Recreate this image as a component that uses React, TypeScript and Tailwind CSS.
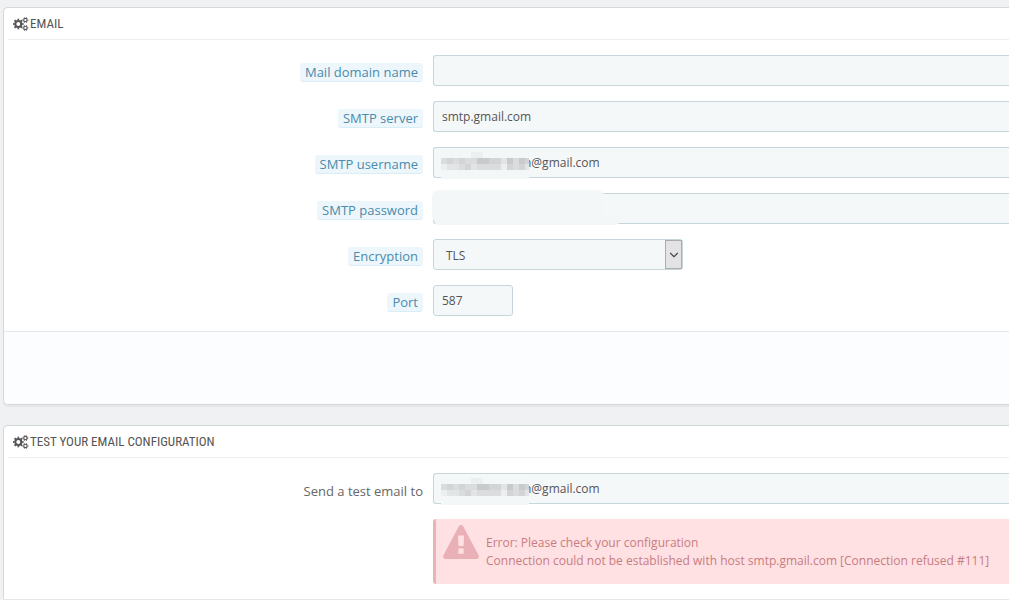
import React from "react";
import { FiChevronDown } from "react-icons/fi";

type PanelProps = {
  title: string;
  footer?: boolean;
  children: React.ReactNode;
};

type RowProps = {
  id: string;
  label: string;
  hint?: boolean;
  children: React.ReactNode;
};

const inputClass =
  "block h-[31px] w-full rounded-l-[3px] border border-r-0 border-[#c7d6db] bg-[#f5f8f9] px-2 text-xs text-[#555] outline-none";

// shade of every 6px block, row by row
const blocks = [
  [0, 0, 0, 0, 0, 1, 1, 0, 0, 0, 0, 0, 0, 0, 0],
  [3, 4, 3, 4, 3, 3, 5, 5, 4, 4, 2, 5, 3, 5, 4],
  [1, 2, 2, 3, 4, 2, 3, 3, 3, 3, 1, 4, 3, 4, 2],
];

const shades = ["#f3f7f8", "#ebeff0", "#e2e5e6", "#dadcdd", "#d2d4d5", "#c8cacb"];

const Mosaic = () => (
  <svg
    className="absolute top-1 left-2 h-7 w-[88px]"
    viewBox="0 0 88 28"
    shapeRendering="crispEdges"
    aria-hidden="true"
  >
    <rect width="88" height="28" fill="#f3f7f8" />
    {blocks.map((row, y) =>
      row.map((shade, x) => (
        <rect key={`${x}-${y}`} x={x * 6} y={1 + y * 6} width="6" height="6" fill={shades[shade]} />
      ))
    )}
  </svg>
);

const CogsIcon = () => (
  <svg className="h-[14px] w-4 shrink-0" viewBox="0 0 16 14" fill="none" stroke="currentColor" aria-hidden="true">
    <circle cx="5.3" cy="7" r="3" strokeWidth="2" />
    <circle cx="5.3" cy="7" r="4.5" strokeWidth="1.6" pathLength="16" strokeDasharray="1 1" strokeDashoffset="0.5" />
    <circle cx="12.4" cy="3.1" r="1.7" strokeWidth="1.1" />
    <circle cx="12.4" cy="3.1" r="2.6" strokeWidth="0.9" pathLength="12" strokeDasharray="1 1" strokeDashoffset="0.5" />
    <circle cx="12.4" cy="10.9" r="1.7" strokeWidth="1.1" />
    <circle cx="12.4" cy="10.9" r="2.6" strokeWidth="0.9" pathLength="12" strokeDasharray="1 1" strokeDashoffset="0.5" />
  </svg>
);

const Panel: React.FC<PanelProps> = ({ title, footer, children }) => (
  <section className="mb-5 ml-[3px] rounded-l-[5px] border border-r-0 border-[#d3d8db] bg-white shadow-[0_2px_0_rgba(0,0,0,0.04)] last:mb-0 last:rounded-bl-none last:border-b-0">
    <h3 className="ml-1 flex h-8 items-center gap-px border-b border-[#eee] pl-[5px] font-['Ubuntu_Condensed','Roboto_Condensed','Open_Sans_Condensed','Liberation_Sans_Narrow',sans-serif] text-[13px] font-normal text-[#555] uppercase">
      <CogsIcon />
      {title}
    </h3>
    <div className="flex flex-col gap-[15px] py-[15px]">{children}</div>
    {footer && <div className="h-[73px] rounded-bl-[5px] border-t border-[#e6e9eb] bg-[#fcfdfe]" />}
  </section>
);

const Row: React.FC<RowProps> = ({ id, label, hint, children }) => (
  <div className="grid grid-cols-[419px_1fr] gap-[10px]">
    <div className="flex items-center justify-end pt-1 text-[13px]">
      <label
        htmlFor={id}
        className={
          hint
            ? "rounded-[3px] border-b border-[#d9edf7] bg-[#edf7fb] px-[5px] leading-[18px] text-[#4a8aac]"
            : "leading-[18px] text-[#666]"
        }
      >
        {label}
      </label>
    </div>
    <div className="relative min-w-0">{children}</div>
  </div>
);

const ErrorAlert = () => (
  <div role="alert" className="ml-[429px] flex h-[65px] rounded-l-[3px] border-l-[3px] border-[#eab3b7] bg-[#ffe1e3] pt-1.5 pl-[7px]">
    <svg className="h-[34px] w-9 shrink-0" viewBox="0 0 36 34" aria-hidden="true">
      <path
        fill="#e9b1b7"
        fillRule="evenodd"
        d="M15.8 1.3a2.5 2.5 0 0 1 4.4 0l15.4 28.9a2.5 2.5 0 0 1-2.2 3.7H2.6a2.5 2.5 0 0 1-2.2-3.7ZM15 10.4l.5 10.6h5l.5-10.6ZM15.4 23.6v5.2h5.2v-5.2Z"
      />
    </svg>
    <p className="pt-[9px] pl-[7px] text-xs leading-[18px] whitespace-nowrap text-[#c77c82]">
      Error: Please check your configuration
      <br />
      Connection could not be established with host smtp.gmail.com [Connection refused #111]
    </p>
  </div>
);

export default function App() {
  return (
    <main className="min-h-screen overflow-hidden bg-[#eff1f2] pt-[7px] font-['Open_Sans',sans-serif]">
      <Panel title="Email" footer>
        <Row id="domain" label="Mail domain name" hint>
          <input id="domain" type="text" className={inputClass} />
        </Row>
        <Row id="server" label="SMTP server" hint>
          <input id="server" type="text" defaultValue="smtp.gmail.com" className={inputClass} />
        </Row>
        <Row id="username" label="SMTP username" hint>
          <input id="username" type="text" defaultValue="n@gmail.com" className={`${inputClass} pl-[90px]`} />
          <Mosaic />
        </Row>
        <Row id="password" label="SMTP password" hint>
          <input id="password" type="password" className={inputClass} />
          <span className="absolute -top-[3px] -left-px h-8 w-[172px] rounded-md bg-[#f3f7f8]" />
          <span className="absolute top-6 left-0.5 h-2 w-[184px] rounded-md bg-[#f3f7f8]" />
        </Row>
        <Row id="encryption" label="Encryption" hint>
          <div className="relative w-[250px]">
            <select
              id="encryption"
              defaultValue="TLS"
              className="block h-[31px] w-full appearance-none rounded-[3px] border border-[#c7d6db] bg-[#f5f8f9] px-3 pt-0.5 text-xs text-[#555]"
            >
              <option>None</option>
              <option>TLS</option>
              <option>SSL</option>
            </select>
            <span className="pointer-events-none absolute inset-y-px right-px flex w-[17px] items-center justify-center border border-[#acacac] bg-[#e3e3e3]">
              <FiChevronDown className="size-[14px] shrink-0 text-[#444]" />
            </span>
          </div>
        </Row>
        <Row id="port" label="Port" hint>
          <input
            id="port"
            type="text"
            defaultValue="587"
            className="block h-[31px] w-20 rounded-[3px] border border-[#c7d6db] bg-[#f5f8f9] px-2 text-xs text-[#555] outline-none"
          />
        </Row>
      </Panel>
      <Panel title="Test your email configuration">
        <Row id="test-email" label="Send a test email to">
          <input id="test-email" type="text" defaultValue="n@gmail.com" className={`${inputClass} pl-[90px]`} />
          <Mosaic />
        </Row>
        <ErrorAlert />
      </Panel>
    </main>
  );
}
